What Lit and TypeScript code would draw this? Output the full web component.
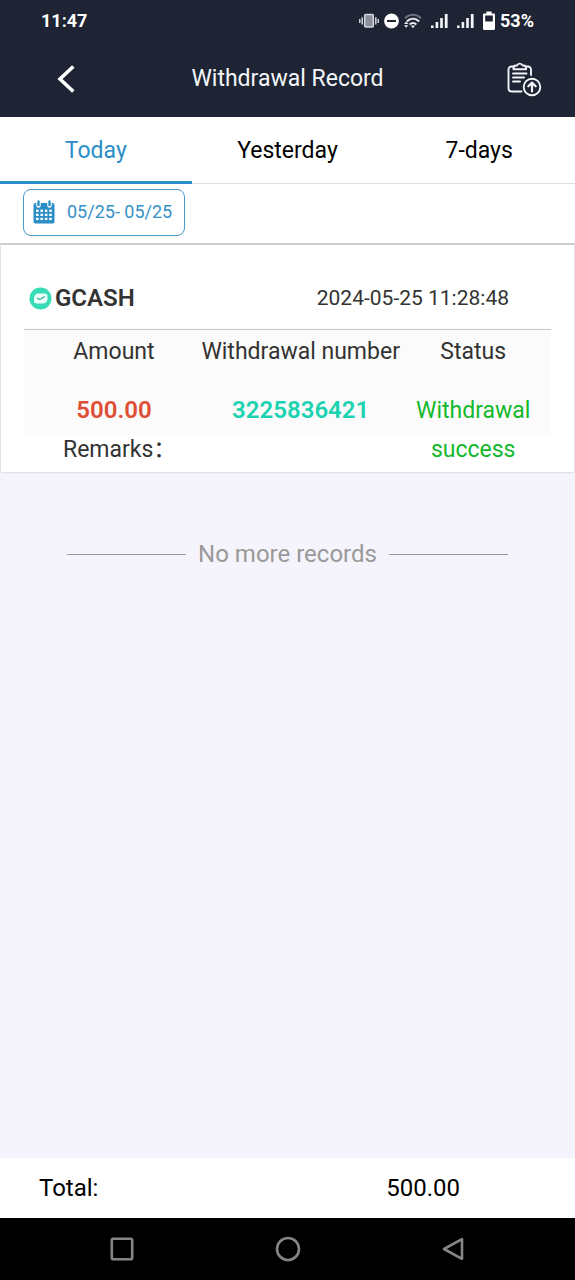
import { LitElement, html, css, svg } from "lit";
import { customElement, property, state } from "lit/decorators.js";

interface WithdrawalRecord {
  channel: string;
  time: string;
  amount: string;
  number: string;
  status: string;
}

@customElement("status-bar")
class StatusBar extends LitElement {
  static styles = css`
    :host {
      display: flex;
      align-items: center;
      justify-content: space-between;
      height: 42px;
      padding: 0 41px;
      color: #fff;
      font-size: 18px;
      line-height: 20px;
      font-weight: 700;
    }
    .icons {
      display: flex;
      align-items: center;
      gap: 5px;
    }
    .signal {
      margin-left: 4px;
    }
    .icons svg {
      display: block;
    }
  `;

  private signal() {
    return html`<svg class="signal" width="17" height="16" viewBox="0 0 17 16" fill="#f4f5f8">
      <rect x="0" y="12.5" width="2.6" height="2.5" />
      <rect x="4.6" y="9" width="2.6" height="6" />
      <rect x="9.2" y="5" width="2.6" height="10" />
      <rect x="13.8" y="1" width="2.8" height="14" />
    </svg>`;
  }

  render() {
    return html`
      <span>11:47</span>
      <div class="icons">
        <svg width="20" height="16" viewBox="0 0 20 16" fill="none" stroke="#d4d7dd" stroke-width="1.5">
          <rect x="5.7" y="1.5" width="8.6" height="12.6" rx="1" fill="#8b909b" />
          <path d="M3.2 4.2v7.4M16.8 4.2v7.4M0.8 6v4M19.2 6v4" />
        </svg>
        <svg width="15" height="16" viewBox="0 0 15 16">
          <circle cx="7.5" cy="8" r="7.4" fill="#fff" />
          <path d="M3 8h9" stroke="#1e2433" stroke-width="2" />
        </svg>
        <svg width="18" height="16" viewBox="0 0 18 16" fill="none" stroke-width="2">
          <path d="M1 5.200C5.600 .6 12.400 .6 17 5.200" stroke="#697080" />
          <path d="M2.800 8.400c3.800-3.500 8.600-3.500 12.400 0M5.600 11.400c2.200-1.900 4.600-1.900 6.800 0" stroke="#eceef2" />
          <path d="M0 11h4.400L2.200 8.600zM0 12.200h4.400L2.200 14.800zM6.800 12.600h4.400L9 15.200z" fill="#eceef2" />
        </svg>
        ${this.signal()} ${this.signal()}
        <svg class="signal" width="12" height="20" viewBox="0 0 12 20">
          <path d="M3.400 .5h5.200v2h2.200c.7 0 1.200.5 1.200 1.200v14.100c0 .7-.5 1.200-1.200 1.200H1.200C.5 19 0 18.500 0 17.800V3.700C0 3 .5 2.500 1.200 2.500h2.200z" fill="#fff" />
          <rect x="2.200" y="4.500" width="7.600" height="6" fill="#1e2433" />
        </svg>
        <span>53%</span>
      </div>
    `;
  }
}

@customElement("record-card")
class RecordCard extends LitElement {
  @property({ attribute: false }) record!: WithdrawalRecord;

  static styles = css`
    :host {
      display: block;
      margin: 0 1px;
      padding: 0 23px;
      background: #fff;
      box-shadow: 0 0 2px #b8b8bc;
      color: #333;
    }
    .head {
      display: flex;
      align-items: center;
      justify-content: space-between;
      padding: 22px 42px 0 5px;
      height: 62px;
      border-bottom: 1px solid #c8c8c8;
    }
    .channel {
      display: flex;
      align-items: center;
      gap: 3px;
      margin: 0;
      font-size: 24px;
      font-weight: 600;
    }
    .channel svg {
      display: block;
    }
    time {
      font-size: 21px;
    }
    table {
      width: 100%;
      table-layout: fixed;
      border-collapse: collapse;
      background: linear-gradient(#fbfbfb 105px, #fff 105px);
      font-size: 23px;
      text-align: center;
    }
    th,
    td {
      padding: 0;
      font-weight: 400;
      vertical-align: top;
      line-height: 39px;
    }
    th {
      height: 61px;
      line-height: 44px;
      white-space: nowrap;
    }
    .c1 {
      width: 33%;
    }
    .c2 {
      width: 39%;
    }
    .c3 {
      width: 28%;
    }
    .c1,
    .amount {
      box-sizing: border-box;
      padding-left: 6px;
    }
    .c3,
    .status {
      box-sizing: border-box;
      padding-right: 8px;
    }
    .amount,
    .number {
      height: 44px;
      font-size: 24px;
      font-weight: 600;
    }
    .amount {
      color: #df4f36;
    }
    .number {
      color: #1bd3b0;
    }
    .status {
      color: #13b92c;
    }
    .remarks {
      height: 37px;
      padding-left: 39px;
      text-align: left;
      line-height: 30px;
    }
  `;

  render() {
    const r = this.record;
    return html`
      <div class="head">
        <h2 class="channel">
          <svg width="23" height="23" viewBox="0 0 23 23">
            <circle cx="11.500" cy="11.500" r="11" fill="#36dcb6" />
            <path d="M9.500 6.500h6a3 3 0 0 1 3 3v2.500a4.500 4.500 0 0 1-4.500 4.500H7.500a2.500 2.500 0 0 1-2.500-2.500V11A4.500 4.500 0 0 1 9.500 6.500z" fill="#e9fffa" />
            <path d="M8 11l2.500 1.500 5.500-3" fill="none" stroke="#46a892" stroke-width="1.300" />
          </svg>
          ${r.channel}
        </h2>
        <time>${r.time}</time>
      </div>
      <table>
        <thead>
          <tr>
            <th class="c1" scope="col">Amount</th>
            <th class="c2" scope="col">Withdrawal number</th>
            <th class="c3" scope="col">Status</th>
          </tr>
        </thead>
        <tbody>
          <tr>
            <td class="amount">${r.amount}</td>
            <td class="number">${r.number}</td>
            <td class="status" rowspan="2">${r.status}</td>
          </tr>
          <tr>
            <td class="remarks" colspan="2">Remarks：</td>
          </tr>
        </tbody>
      </table>
    `;
  }
}

@customElement("app-root")
class AppRoot extends LitElement {
  @state() private active = 0;

  private tabs = ["Today", "Yesterday", "7-days"];
  private records: WithdrawalRecord[] = [
    {
      channel: "GCASH",
      time: "2024-05-25 11:28:48",
      amount: "500.00",
      number: "3225836421",
      status: "Withdrawal success",
    },
  ];

  static styles = css`
    :host {
      display: flex;
      flex-direction: column;
      min-height: 100vh;
      background: #f5f4fc;
      color: #000;
      font-family: Roboto, "Noto Sans CJK SC", sans-serif;
      font-size: 23px;
    }
    * {
      box-sizing: border-box;
    }
    button {
      margin: 0;
      padding: 0;
      border: 0;
      background: none;
      color: inherit;
      font: inherit;
      cursor: pointer;
    }
    svg {
      display: block;
    }
    .top {
      background: #1e2433;
      color: #f4f6fa;
    }
    .bar {
      display: grid;
      grid-template-columns: 1fr auto 1fr;
      align-items: center;
      height: 75px;
      padding: 0 33px 2px 57px;
    }
    .bar h1 {
      margin: 0 24px 0 0;
      font-size: 23px;
      line-height: 28px;
      font-weight: 400;
    }
    .export {
      justify-self: end;
    }
    .tabs {
      display: grid;
      grid-template-columns: repeat(3, 1fr);
      height: 67px;
      background: #fff;
      border-bottom: 1px solid #dedede;
    }
    .tab {
      height: 67px;
      padding-top: 2px;
      border-bottom: 3px solid transparent;
    }
    .tab.active {
      color: #2b8ec9;
      border-bottom-color: #2b8ec9;
    }
    .filter {
      padding: 5px 23px 7px;
      background: #fff;
      border-bottom: 2px solid #d3d3d5;
    }
    .range {
      display: flex;
      align-items: center;
      gap: 12px;
      height: 47px;
      padding: 0 12px 2px 9px;
      border: 1px solid #4a97c9;
      border-radius: 8px;
      color: #3590c6;
      font-size: 18px;
    }
    main {
      flex: 1;
    }
    .end {
      display: flex;
      align-items: center;
      gap: 12px;
      margin: 68px 67px 0;
      color: #999;
      font-size: 24px;
      line-height: 28px;
    }
    .end::before,
    .end::after {
      content: "";
      flex: 1;
      height: 1px;
      background: #9a9a9e;
    }
    .total {
      display: flex;
      justify-content: space-between;
      align-items: center;
      height: 60px;
      padding: 0 20% 0 39px;
      background: #fff;
      font-size: 24px;
    }
    .nav {
      display: flex;
      justify-content: space-between;
      align-items: center;
      height: 62px;
      padding: 0 110px;
      background: #000;
    }
  `;

  private calendar() {
    const cells = [];
    for (let row = 0; row < 3; row++) {
      for (let col = 0; col < 4; col++) {
        cells.push(svg`<rect x=${3 + col * 4.4} y=${9.6 + row * 4.1} width="2.600" height="2.300" fill="#fff" />`);
      }
    }
    return html`<svg width="22" height="24" viewBox="0 0 22 24">
      <rect x="0.500" y="3" width="21" height="20.500" rx="2" fill="#2b8ec9" />
      <path d="M5.500 1.500v4M16.500 1.500v4" stroke="#fff" stroke-width="4.500" stroke-linecap="round" />
      <path d="M5.500 1.500v3.500M16.500 1.500v3.500" stroke="#2b8ec9" stroke-width="2.400" stroke-linecap="round" />
      ${cells}
    </svg>`;
  }

  render() {
    return html`
      <header class="top">
        <status-bar></status-bar>
        <div class="bar">
          <button aria-label="Back">
            <svg width="18" height="28" viewBox="0 0 18 28" fill="none" stroke="#fff" stroke-width="3.600">
              <path d="M16.300 1.500L3 14l13.300 12.500" />
            </svg>
          </button>
          <h1>Withdrawal Record</h1>
          <button class="export" aria-label="Export records">
            <svg width="36" height="36" viewBox="0 0 36 36" fill="none" stroke="#f1f3f7" stroke-width="1.900" stroke-linecap="round" stroke-linejoin="round">
              <path d="M8 5.500H5.500a3 3 0 0 0-3 3v19a3 3 0 0 0 3 3H15.500M20 5.500h2a3 3 0 0 1 3 3V14" />
              <path d="M7.500 8.300V7a2.500 2.500 0 0 1 2.500-2.500h1a3 3 0 0 1 5.600 0h1A2.500 2.500 0 0 1 20.100 7v1.300z" />
              <path d="M7 12.500h13.500M7 16.500h11M7 20.500h7" />
              <circle cx="26" cy="26" r="8.300" />
              <path d="M26 30.500v-8.500M22.300 25.300l3.700-3.700 3.700 3.700" stroke-width="2.200" />
            </svg>
          </button>
        </div>
      </header>
      <nav class="tabs">
        ${this.tabs.map(
          (t, i) => html`<button class="tab ${i === this.active ? "active" : ""}" @click=${() => (this.active = i)}>${t}</button>`
        )}
      </nav>
      <div class="filter">
        <button class="range">${this.calendar()}<span>05/25- 05/25</span></button>
      </div>
      <main>
        ${this.records.map((r) => html`<record-card .record=${r}></record-card>`)}
        <div class="end">No more records</div>
      </main>
      <footer>
        <div class="total"><span>Total:</span><span>500.00</span></div>
        <div class="nav">
          <button aria-label="Recent apps">
            <svg width="24" height="24" viewBox="0 0 24 24" fill="none" stroke="#858585" stroke-width="2.600">
              <rect x="1.800" y="1.800" width="20.400" height="20.400" rx="1.500" />
            </svg>
          </button>
          <button aria-label="Home">
            <svg width="26" height="26" viewBox="0 0 26 26" fill="none" stroke="#858585" stroke-width="2.600">
              <circle cx="13" cy="13" r="11" />
            </svg>
          </button>
          <button aria-label="Back">
            <svg width="24" height="24" viewBox="0 0 24 24" fill="none" stroke="#858585" stroke-width="2.600" stroke-linejoin="round">
              <path d="M21 2.200v19.600L3 12z" />
            </svg>
          </button>
        </div>
      </footer>
    `;
  }
}
